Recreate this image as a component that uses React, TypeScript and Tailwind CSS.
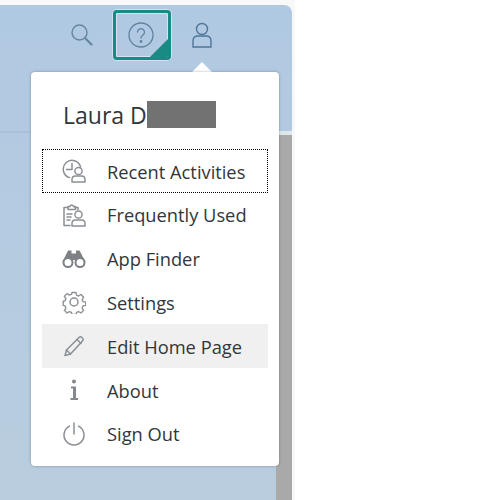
import React from "react";

const s = { fill: "none", stroke: "#8b8f94", strokeWidth: 1.5, strokeLinecap: "round", strokeLinejoin: "round" } as const;

const Clock = () => (
  <svg width="24" height="24" viewBox="0 0 24 24" {...s}>
    <path d="M7.500 18.600A8.800 8.800 0 1 1 18.600 8" />
    <path d="M10 4.500V10.500H4.500" />
    <circle cx="16.500" cy="12" r="3.600" />
    <path d="M10 23v-2.500c0-2 1.500-3.500 3.500-3.500h6c2 0 3.500 1.500 3.500 3.500V23z" />
  </svg>
);
const Clip = () => (
  <svg width="24" height="24" viewBox="0 0 24 24" {...s}>
    <path d="M8 22.500H2V4.500h4M13 4.500h3v2" />
    <path d="M6 6.500v-3h2a1.800 1.800 0 0 1 3.500 0H13.500v3z" />
    <path d="M5 11h5M5 14h4M5 17h3" />
    <circle cx="16.500" cy="11.500" r="3.600" />
    <path d="M10 23v-2.500c0-2 1.500-3.500 3.500-3.500h6c2 0 3.500 1.500 3.500 3.500V23z" />
  </svg>
);
const Binoculars = () => (
  <svg width="24" height="24" viewBox="0 0 24 24">
    <path fill="#7d8186" d="M6 4.500h3.500v3h4.500v-3H17.500l6 11.500h-9l-1-2h-3l-1 2H.5z" />
    <circle cx="6" cy="16.500" r="4.500" fill="#fff" stroke="#7d8186" strokeWidth="2" />
    <circle cx="18" cy="16.500" r="4.500" fill="#fff" stroke="#7d8186" strokeWidth="2" />
  </svg>
);
const Gear = () => (
  <svg width="24" height="24" viewBox="0 0 24 24" {...s}>
    <path d="M9.800 1.500h4.400l.6 3 2.300 1 2.600-1.700 3 3-1.700 2.600 1 2.300 3 .6v-.300 3.900l-3 .6-1 2.300 1.700 2.600-3 3-2.600-1.700-2.300 1-.6 2.300H9.800l-.6-2.300-2.300-1-2.600 1.700-3-3 1.700-2.600-1-2.300-2-.6V11.300l2-.6 1-2.300-1.700-2.600 3-3 2.600 1.700 2.300-1z" transform="translate(1.200 1.100) scale(.9)" />
    <circle cx="12" cy="12" r="4" />
  </svg>
);
const Pencil = () => (
  <svg width="24" height="24" viewBox="0 0 24 24" {...s}>
    <path d="M3 21.500l1.500-5.500L17 3.500a2 2 0 0 1 3 0l.5.500a2 2 0 0 1 0 3L8.500 20z" />
    <path d="M4.500 16l4 4M15 5.500l4 4" />
  </svg>
);
const Info = () => (
  <svg width="24" height="24" viewBox="0 0 24 24">
    <circle cx="12" cy="3.500" r="2" fill="#85888c" />
    <path d="M9 8.500h5V20h2v2H8.500v-2h2.500v-9.500H9z" fill="#85888c" />
  </svg>
);
const Power = () => (
  <svg width="24" height="24" viewBox="0 0 24 24" {...s}>
    <path d="M12 1v11" />
    <path d="M7.500 4.100a10 10 0 1 0 9 0" />
  </svg>
);

const items = [
  { label: "Recent Activities", icon: <Clock />, cls: "outline-1 -outline-offset-1 outline-dotted outline-black" },
  { label: "Frequently Used", icon: <Clip />, cls: "" },
  { label: "App Finder", icon: <Binoculars />, cls: "" },
  { label: "Settings", icon: <Gear />, cls: "" },
  { label: "Edit Home Page", icon: <Pencil />, cls: "bg-[#f0f0f0]" },
  { label: "About", icon: <Info />, cls: "" },
  { label: "Sign Out", icon: <Power />, cls: "" },
];

export default function App() {
  return (
    <div className="w-[500px] h-[500px] bg-white relative overflow-hidden" style={{ fontFamily: '"Open Sans", sans-serif' }}>
      <div className="w-[295px] h-[500px] pt-[5px] bg-[#f8f8f8]">
        <div className="w-[292px] h-[495px] flex flex-col rounded-tr-lg bg-gradient-to-b from-[#b0c9e2] to-[#b9cdde] overflow-hidden">
          <div className="h-[128px] shrink-0 border-b-2 border-[#a9c1d9] pt-[5px] pl-[71px] flex items-start gap-[20px]">
            <div className="h-[50px] flex items-center">
              <svg width="22" height="22" viewBox="0 0 22 22" fill="none" stroke="#66859f" strokeWidth="1.400" strokeLinecap="round">
                <circle cx="8.500" cy="8.500" r="7.500" />
                <path d="M14.500 14.500l6 6" strokeWidth="2.200" />
              </svg>
            </div>
            <div className="relative w-[58px] h-[50px] rounded-[4px] border-[3px] border-[#1a8a84] flex items-center justify-center overflow-hidden shadow-[0_0_0_1px_#cfe0ee,inset_0_0_0_1px_#d5e3ef]">
              <svg className="mr-[3px]" width="26" height="26" viewBox="0 0 26 26" fill="none" stroke="#5f82a1" strokeWidth="1.300">
                <circle cx="13" cy="13" r="12" />
                <path d="M9.500 10a3.500 3.500 0 1 1 5.500 3c-1.500 1-2 1.500-2 3" strokeLinecap="round" />
                <circle cx="13" cy="19.500" r=".8" fill="#5f82a1" />
              </svg>
              <svg className="absolute right-0 bottom-0" width="18" height="18" viewBox="0 0 18 18">
                <path d="M18 0v18H0z" fill="#1a8a84" />
              </svg>
            </div>
            <div className="h-[50px] flex items-center">
              <svg width="22" height="26" viewBox="0 0 22 26" fill="none" stroke="#4f7699" strokeWidth="1.400">
                <circle cx="11" cy="7" r="5.500" />
                <path d="M2 25v-6c0-3 2-5 5-5h8c3 0 5 2 5 5v6z" />
              </svg>
            </div>
          </div>
          <div className="flex-1 flex justify-end">
            <div className="w-[16px] -mt-[2px] border-t-[4px] border-[#dfe7ee] bg-[#a9a9a9]" />
          </div>
        </div>
      </div>
      {/* popover arrow */}
      <div className="absolute left-[195px] top-[65px] w-[14px] h-[14px] rotate-45 bg-white" />
      {/* popover */}
      <div className="absolute left-[31px] top-[72px] w-[248px] h-[394px] bg-white rounded-[4px] shadow-[0_0_3px_rgba(0,0,0,0.3)] px-[11px]">
        <div className="h-[77px] pl-[21px] pt-[27px] flex items-start text-[23px] leading-[32px] text-[#32363a]">
          <span>Laura D</span>
          <span className="w-[69px] h-[27px] mt-[2px] bg-[#727272]" />
        </div>
        <div className="flex flex-col">
          {items.map((it) => (
            <div key={it.label} className={`h-[43.8px] flex items-center pl-[20px] gap-[21px] text-[18.300px] text-[#32363a] ${it.cls}`}>
              <span className="w-[24px] h-[24px] flex items-center justify-center shrink-0">{it.icon}</span>
              <span className="mt-[1px]">{it.label}</span>
            </div>
          ))}
        </div>
      </div>
    </div>
  );
}
